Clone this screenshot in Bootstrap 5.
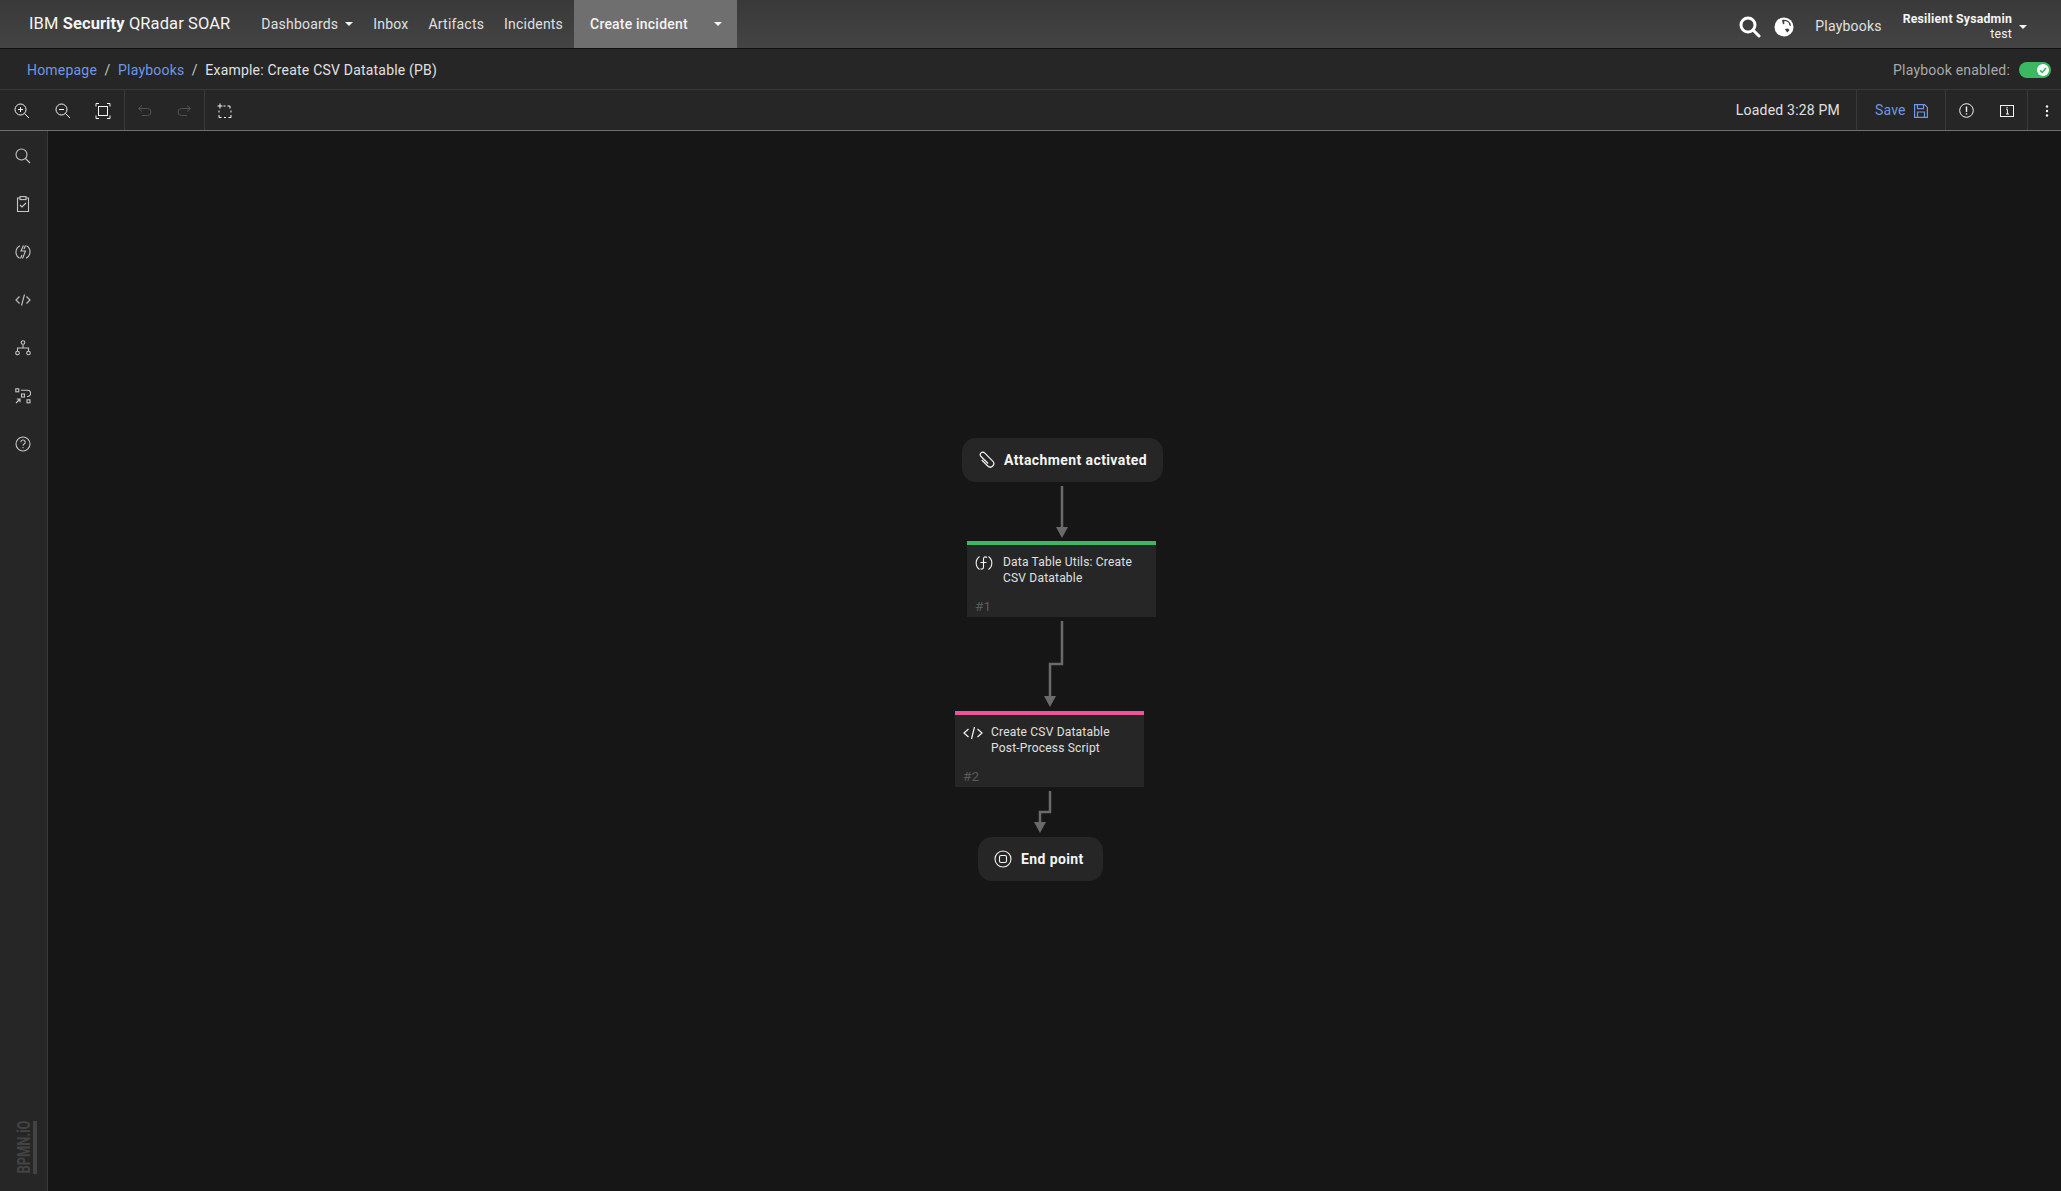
<!DOCTYPE html>
<html lang="en">
<head>
  <meta charset="UTF-8">
  <meta name="viewport" content="width=device-width, initial-scale=1">
  <title>IBM Security QRadar SOAR</title>
  <link href="https://cdn.jsdelivr.net/npm/bootstrap@5.3.0/dist/css/bootstrap.min.css" rel="stylesheet">
  <style>
    html, body {
      height: 100%;
    }
    body {
      background: #161616;
      color: #f4f4f4;
      font-family: Roboto, "Liberation Sans", sans-serif;
      font-size: 14px;
      letter-spacing: 0.2px;
      overflow: hidden;
    }
    .app-nav {
      height: 49px;
      padding: 0;
      background: linear-gradient(#393939, #444444);
      border-bottom: 1px solid #111111;
      align-items: stretch;
    }
    .app-brand {
      margin: 0 31px 0 29px;
      padding: 0;
      font-size: 16.5px;
      color: #f4f4f4;
      display: flex;
      align-items: center;
      letter-spacing: 0.1px;
    }
    .navbar-expand .navbar-nav .nav-link {
      color: #e0e0e0;
      padding: 0;
      margin-right: 20px;
      display: flex;
      align-items: center;
      font-size: 14px;
    }
    .navbar-expand .navbar-nav .nav-link:nth-child(4) {
      margin-right: 21px;
    }
    .caret {
      display: inline-block;
      width: 0;
      height: 0;
      margin-left: 7px;
      border-left: 4px solid transparent;
      border-right: 4px solid transparent;
      border-top: 4px solid #f4f4f4;
    }
    .create-btn {
      width: 163px;
      margin-left: -10px;
      padding: 0 15px 0 16px;
      background: #6f6f6f;
      color: #f4f4f4;
      font-weight: 500;
      display: flex;
      align-items: center;
      justify-content: space-between;
    }
    .nav-right {
      padding: 5px 34px 0 0;
    }
    .globe-icon {
      margin-left: 13px;
    }
    .nav-plain {
      color: #e0e0e0;
      margin: 0 21px 0 21px;
    }
    .user-box {
      line-height: 15px;
      text-align: right;
      font-size: 12.3px;
    }
    .user-box b {
      display: block;
      font-weight: 700;
    }
    .crumb-bar {
      height: 41px;
      background: #262626;
      border-bottom: 1px solid #393939;
      padding: 1px 10px 0 27px;
    }
    .crumb-bar .breadcrumb {
      margin: 0;
      padding-top: 1px;
      font-size: 14px;
      --bs-breadcrumb-divider-color: #c6c6c6;
      --bs-breadcrumb-item-active-color: #e0e0e0;
      --bs-breadcrumb-item-padding-x: 7.5px;
    }
    .crumb-bar a, .save-link {
      color: #6c98e4;
      text-decoration: none;
    }
    .enabled-label {
      color: #a8a8a8;
      margin-right: 9px;
      padding-top: 1px;
    }
    .toggle-pill {
      width: 32px;
      height: 16px;
      background: #3cb960;
      border-radius: 8px;
      display: flex;
      align-items: center;
      justify-content: flex-end;
      padding-right: 2px;
    }
    .tool-bar {
      height: 41px;
      background: #262626;
      border-bottom: 1px solid #6f6f6f;
    }
    .tool-group {
      height: 100%;
      display: flex;
      align-items: center;
      border-right: 1px solid #393939;
    }
    .tool-btn {
      width: 40.5px;
      height: 100%;
      padding-top: 1px;
      display: flex;
      align-items: center;
      justify-content: center;
    }
    .first-group {
      width: 125px;
      padding-left: 2px;
    }
    .undo-group {
      width: 80px;
    }
    .loaded-text {
      color: #e0e0e0;
      margin-right: 16px;
      padding-top: 1px;
    }
    .save-group {
      width: 90px;
      border-left: 1px solid #393939;
      padding: 1px 0 0 18px;
      gap: 8px;
    }
    .info-group {
      width: 82px;
    }
    .more-btn {
      width: 33px;
      display: flex;
      justify-content: center;
      padding: 1px 0 0 5px;
    }
    .main-area {
      height: calc(100% - 131px);
    }
    .side-rail {
      width: 48px;
      background: #262626;
      border-right: 1px solid #393939;
      padding: 1px 1px 0 0;
    }
    .rail-btn {
      height: 48px;
      display: flex;
      align-items: center;
      justify-content: center;
    }
    .bpmn-logo {
      margin-top: auto;
      margin-bottom: 17px;
      display: flex;
      justify-content: center;
      align-items: center;
      padding-left: 5px;
    }
    .bpmn-text {
      writing-mode: vertical-rl;
      transform: rotate(180deg) scale(1, 0.68);
      margin: -12.5px 0;
      font-size: 19px;
      line-height: 17px;
      font-weight: 700;
      color: #434343;
      letter-spacing: 0;
    }
    .bpmn-bar {
      width: 4px;
      height: 53px;
      background: #434343;
      margin-left: 1px;
    }
    .flow-canvas {
      position: relative;
      flex-grow: 1;
      background: #161616;
    }
    .flow-lines {
      position: absolute;
      left: -48px;
      top: -131px;
      width: 2061px;
      height: 1191px;
    }
    .event-node, .task-node {
      position: absolute;
      background: #262626;
      color: #f4f4f4;
    }
    .event-node {
      height: 44px;
      border-radius: 14px;
      display: flex;
      align-items: center;
      font-weight: 700;
      font-size: 14px;
      letter-spacing: 0.4px;
    }
    .task-node {
      width: 189px;
      height: 76px;
      border-top: 4px solid #3cb960;
      font-size: 12px;
      line-height: 16px;
      color: #e0e0e0;
    }
    .task-pink {
      border-top-color: #ee5396;
    }
    .task-head {
      display: flex;
      padding: 9px 6px 0 8px;
      gap: 10px;
    }
    .task-title {
      width: 140px;
    }
    .task-pink .task-title {
      margin-left: -2px;
    }
    .task-num {
      position: absolute;
      left: 8px;
      bottom: 3px;
      color: #5a5a5a;
      font-size: 13.5px;
      line-height: 16px;
    }
    .trigger-pos { left: 914px; top: 307px; width: 201px; padding-left: 14px; gap: 8px; }
    .end-pos { left: 930px; top: 706px; width: 125px; padding-left: 16px; gap: 9px; }
    .task-one { left: 919px; top: 410px; }
    .task-two { left: 907px; top: 580px; }
  </style>
</head>
<body>
  <nav class="navbar navbar-expand app-nav">
    <a class="navbar-brand app-brand" href="#"><span>IBM <b>Security</b> QRadar SOAR</span></a>
    <div class="navbar-nav align-items-stretch">
      <a class="nav-link" href="#">Dashboards<span class="caret"></span></a>
      <a class="nav-link" href="#">Inbox</a>
      <a class="nav-link" href="#">Artifacts</a>
      <a class="nav-link" href="#">Incidents</a>
      <div class="create-btn"><span>Create incident</span><span class="caret"></span></div>
    </div>
    <div class="ms-auto d-flex align-items-center nav-right">
      <svg width="22" height="22" viewBox="0 0 22 22" fill="none" stroke="#fff" stroke-width="3"><circle cx="9" cy="9" r="7"/><path d="M14 14l6 6" stroke-linecap="round"/></svg>
      <svg class="globe-icon" width="20" height="20" viewBox="0 0 20 20"><circle cx="10" cy="10" r="9.5" fill="#fff"/><path d="M8 3c3.500-1 7 .5 8.500 3.500l.5 2.500-1.500-.5-1-3-3-1.500-1.500.5.500 2-1.500 1zM11 12l3-.5 1.500 1.500-2 2.500-1.500-1.500z" fill="#3f3f3f"/></svg>
      <span class="text-nowrap nav-plain">Playbooks</span>
      <div class="user-box"><b>Resilient Sysadmin</b>test</div>
      <span class="caret"></span>
    </div>
  </nav>

  <div class="crumb-bar d-flex align-items-center justify-content-between">
    <ol class="breadcrumb">
      <li class="breadcrumb-item"><a href="#">Homepage</a></li>
      <li class="breadcrumb-item"><a href="#">Playbooks</a></li>
      <li class="breadcrumb-item active">Example: Create CSV Datatable (PB)</li>
    </ol>
    <div class="d-flex align-items-center">
      <span class="enabled-label">Playbook enabled:</span>
      <span class="toggle-pill"><svg width="12" height="12" viewBox="0 0 12 12"><circle cx="6" cy="6" r="6" fill="#fff"/><path d="M3 6.200l2.200 2.200L9 4" fill="none" stroke="#3cb960" stroke-width="1.600"/></svg></span>
    </div>
  </div>

  <div class="tool-bar d-flex align-items-center">
    <div class="tool-group first-group">
      <div class="tool-btn"><svg width="16" height="16" viewBox="0 0 16 16" fill="none" stroke="#f4f4f4"><circle cx="6.500" cy="6.500" r="5.500"/><path d="M10.500 10.500l4.500 4.500M6.500 4v5M4 6.500h5"/></svg></div>
      <div class="tool-btn"><svg width="16" height="16" viewBox="0 0 16 16" fill="none" stroke="#f4f4f4"><circle cx="6.500" cy="6.500" r="5.500"/><path d="M10.500 10.500l4.500 4.500M4 6.500h5"/></svg></div>
      <div class="tool-btn"><svg width="16" height="16" viewBox="0 0 16 16" fill="none" stroke="#f4f4f4"><path d="M1 3.500V.5h3M12 .5h3v3M15 12.500v3h-3M4 15.500H1v-3"/><rect x="3.500" y="3.500" width="9" height="9"/></svg></div>
    </div>
    <div class="tool-group undo-group">
      <div class="tool-btn"><svg width="16" height="16" viewBox="0 0 16 16" fill="none" stroke="#525252"><path d="M5 2.500L1.500 5.500 5 8.500M1.500 5.500h9a3.500 3.500 0 0 1 0 7H5"/></svg></div>
      <div class="tool-btn"><svg width="16" height="16" viewBox="0 0 16 16" fill="none" stroke="#525252"><path d="M11 2.500l3.500 3-3.500 3M14.500 5.500h-9a3.500 3.500 0 0 0 0 7H11"/></svg></div>
    </div>
    <div class="tool-btn"><svg width="16" height="16" viewBox="0 0 16 16" fill="none" stroke="#f4f4f4"><path d="M3 .5v5M.5 3h5"/><path d="M7 3h2M11 3h2.500v2.500M14.500 7.500v2M14.500 12v2.500H12M9.500 14.500h-2M5 14.500H2.500V12M2.500 9.500v-2" transform="translate(-.5 0)"/></svg></div>

    <span class="ms-auto loaded-text">Loaded 3:28 PM</span>
    <div class="tool-group save-group">
      <a class="save-link" href="#">Save</a>
      <svg width="14" height="14" viewBox="0 0 14 14" fill="none" stroke="#6c98e4" stroke-width="1.200"><path d="M.6.6h10l2.800 2.800v10H.6z"/><path d="M3.500.6v4h6v-4M3.500 13.400V8h7v5.400"/></svg>
    </div>
    <div class="tool-group info-group">
      <div class="tool-btn"><svg width="15" height="15" viewBox="0 0 15 15" fill="none" stroke="#f4f4f4"><circle cx="7.500" cy="7.500" r="6.800"/><path d="M7.500 3.500v5.500M7.500 10.300v1.200" stroke-width="1.400"/></svg></div>
      <div class="tool-btn"><svg width="14" height="14" viewBox="0 0 14 14" fill="none" stroke="#f4f4f4"><rect x=".5" y="1.500" width="13" height="11"/><path d="M6 5.200h1.400V10M6 10h3M6.500 3.500h1.200"/></svg></div>
    </div>
    <div class="more-btn"><svg width="4" height="12" viewBox="0 0 4 12" fill="#f4f4f4"><circle cx="2" cy="1.500" r="1.200"/><circle cx="2" cy="6" r="1.200"/><circle cx="2" cy="10.500" r="1.200"/></svg></div>
  </div>

  <div class="main-area d-flex">
    <div class="side-rail d-flex flex-column">
      <div class="rail-btn"><svg width="16" height="16" viewBox="0 0 16 16" fill="none" stroke="#c6c6c6" stroke-width="1.100"><circle cx="6.500" cy="6.500" r="5.500"/><path d="M10.500 10.500l4.500 4.500"/></svg></div>
      <div class="rail-btn"><svg width="14" height="16" viewBox="0 0 14 16" fill="none" stroke="#c6c6c6" stroke-width="1.100"><path d="M4 2H1.500v13.500h11V2H10"/><rect x="4" y=".6" width="6" height="3"/><path d="M4 9l2 2 4-4"/></svg></div>
      <div class="rail-btn"><svg width="16" height="16" viewBox="0 0 16 16" fill="none" stroke="#c6c6c6" stroke-width="1.100"><path d="M5 1.800a7 7 0 0 0-.5 12.400M11 14.200a7 7 0 0 0 .5-12.400"/><path d="M8.500 1.500L6 7h4.500L7.500 14.500M10.500 1.500L9 5M5.500 14.500L7 11"/></svg></div>
      <div class="rail-btn"><svg width="16" height="12" viewBox="0 0 16 12" fill="none" stroke="#c6c6c6" stroke-width="1.100"><path d="M4.500 2.500L1 6l3.500 3.500M11.500 2.500L15 6l-3.500 3.500M9.500.5l-3 11"/></svg></div>
      <div class="rail-btn"><svg width="16" height="16" viewBox="0 0 16 16" fill="none" stroke="#c6c6c6" stroke-width="1.100"><circle cx="8" cy="2.500" r="1.800"/><circle cx="2.500" cy="13" r="1.800"/><circle cx="13.500" cy="13" r="1.800"/><path d="M8 4.500V8M2.500 11V8h11v3"/></svg></div>
      <div class="rail-btn"><svg width="16" height="16" viewBox="0 0 16 16" fill="none" stroke="#c6c6c6" stroke-width="1.100"><rect x=".8" y=".8" width="3" height="3"/><rect x="6.500" y="6" width="3" height="3"/><rect x="12" y="11.800" width="3" height="3"/><path d="M6 2.300h6.500a3 3 0 0 1 0 6.200H12M1 15l4-4M1.800 11H5v3.200"/></svg></div>
      <div class="rail-btn"><svg width="16" height="16" viewBox="0 0 16 16" fill="none" stroke="#c6c6c6" stroke-width="1.100"><circle cx="8" cy="8" r="7"/><path d="M5.800 6.200a2.200 2.200 0 1 1 3.300 1.900c-.7.400-1.100.8-1.100 1.700M8 11v1.200"/></svg></div>
      <div class="bpmn-logo"><span class="bpmn-text">BPMN.iO</span><span class="bpmn-bar"></span></div>
    </div>

    <div class="flow-canvas">
      <svg class="flow-lines" viewBox="0 0 2061 1191" fill="none" stroke="#6a6a6a" stroke-width="2.500">
        <path d="M1062 486V530"/>
        <path d="M1056 527h12L1062 538z" fill="#6a6a6a" stroke="none"/>
        <path d="M1062 621V664H1050V700"/>
        <path d="M1044 696h12L1050 707z" fill="#6a6a6a" stroke="none"/>
        <path d="M1050 791V812H1040V826"/>
        <path d="M1034 822h12L1040 833z" fill="#6a6a6a" stroke="none"/>
      </svg>

      <div class="event-node trigger-pos">
        <svg width="20" height="20" viewBox="0 0 20 20" fill="none" stroke="#f4f4f4" stroke-width="1.200"><path transform="rotate(45 10 10)" d="M7 13H15.500a3.500 3.500 0 0 0 0-7H4a2.500 2.500 0 0 0 0 5H14"/></svg>
        <span>Attachment activated</span>
      </div>

      <div class="task-node task-one">
        <div class="task-head">
          <svg width="18" height="18" viewBox="0 0 18 18" fill="none" stroke="#f4f4f4" stroke-width="1.100"><path d="M4.500 2.500a8 8 0 0 0 0 13M13.500 2.500a8 8 0 0 1 0 13"/><path d="M12 3.500c-2-1.200-3.500-.5-3.500 1.500v8c0 1.800-1.300 2.500-3 1.800M5.500 8.500h6"/></svg>
          <div class="task-title">Data Table Utils: Create CSV Datatable</div>
        </div>
        <div class="task-num">#1</div>
      </div>

      <div class="task-node task-pink task-two">
        <div class="task-head">
          <svg width="20" height="18" viewBox="0 0 20 18" fill="none" stroke="#f4f4f4" stroke-width="1.200"><path d="M5.500 5L1 9l4.500 4M14.500 5L19 9l-4.500 4M11.500 3l-3 12"/></svg>
          <div class="task-title">Create CSV Datatable Post-Process Script</div>
        </div>
        <div class="task-num">#2</div>
      </div>

      <div class="event-node end-pos">
        <svg width="18" height="18" viewBox="0 0 18 18" fill="none" stroke="#f4f4f4" stroke-width="1.100"><circle cx="9" cy="9" r="8"/><rect x="5.500" y="5.500" width="7" height="7" rx="1.500"/></svg>
        <span>End point</span>
      </div>
    </div>
  </div>

  <script src="https://cdn.jsdelivr.net/npm/bootstrap@5.3.0/dist/js/bootstrap.bundle.min.js"></script>
</body>
</html>
